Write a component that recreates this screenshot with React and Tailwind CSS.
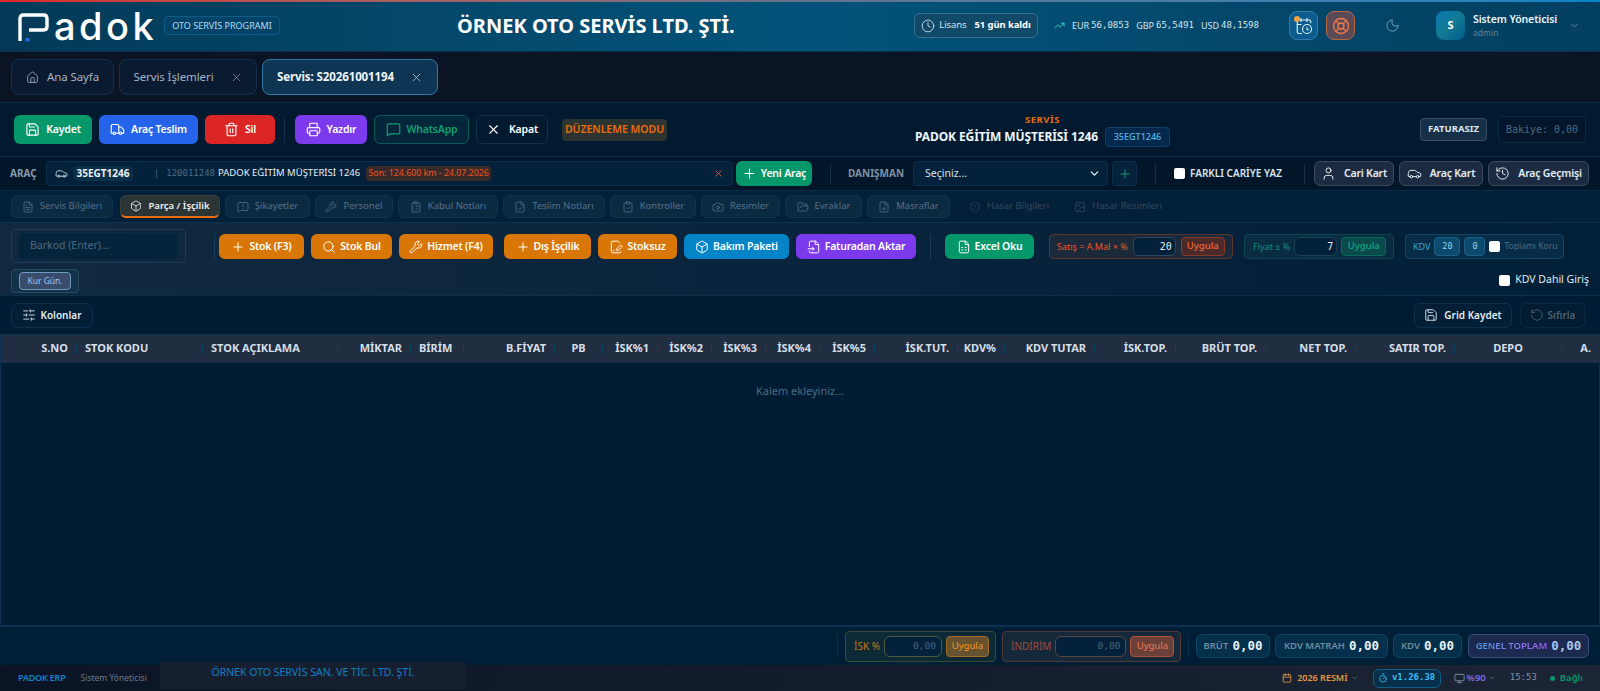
import React from "react";
import {
  Save, Truck, Trash2, Printer, MessageSquare, X, House, Clock, TrendingUp, CalendarClock, LifeBuoy, Moon,
  ChevronDown, Car, Plus, User, History, FileText, Box, MessageSquareWarning, Wrench, ClipboardList, FileCheck,
  ClipboardCheck, Camera, FolderOpen, FileDown, ShieldAlert, Image as ImageIcon, Search, FileSpreadsheet,
  FileInput, FilePenLine, SlidersHorizontal, RotateCcw, Monitor, Calendar, Timer,
} from "lucide-react";

const Tab = ({ className, children }) => (
  <div className={`h-9 flex items-center rounded-lg border text-[11.5px] tracking-[-0.1px] ${className}`}>{children}</div>
);

const ActionBtn = ({ icon: I, label, className, color = "text-white" }) => (
  <button className={`h-[29px] flex items-center justify-center gap-1.5 rounded-md text-[10.5px] font-semibold tracking-[-0.2px] ${color} ${className}`}>
    <I size={15} strokeWidth={1.8} />
    {label}
  </button>
);

const CardBtn = ({ icon: I, label, className }) => (
  <button className={`h-[25px] flex items-center justify-center gap-2 rounded-md border border-[#3a4a60] bg-[#1c2b42] text-[10.5px] font-semibold tracking-[-0.2px] text-[#e5edf5] ${className}`}>
    <I size={15} strokeWidth={1.6} />
    {label}
  </button>
);

const SubTab = ({ icon: I, label, className }) => (
  <div className={`h-[23px] flex items-center justify-center gap-1.5 rounded-md border border-[#0e3350] bg-[#0a2a42] text-[9.5px] text-[#57708a] ${className}`}>
    <I size={12} strokeWidth={1.6} />
    {label}
  </div>
);

const ToolBtn = ({ icon: I, label, className }) => (
  <button className={`h-[25px] flex items-center justify-center gap-1 rounded-md text-[10.5px] font-semibold tracking-[-0.2px] text-white ${className}`}>
    <I size={14} strokeWidth={1.7} />
    {label}
  </button>
);

const Sep = ({ className }) => <div className={`w-px shrink-0 ${className}`} />;

const cols = [
  ["S.NO", "r"], ["STOK KODU", "l"], ["STOK AÇIKLAMA", "l"], ["MİKTAR", "r"], ["BİRİM", "l"], ["B.FİYAT", "r"], ["PB", "c"],
  ["İSK%1", "r"], ["İSK%2", "r"], ["İSK%3", "r"], ["İSK%4", "r"], ["İSK%5", "r"], ["İSK.TUT.", "r"], ["KDV%", "r"],
  ["KDV TUTAR", "r"], ["İSK.TOP.", "r"], ["BRÜT TOP.", "r"], ["NET TOP.", "r"], ["SATIR TOP.", "r"], ["DEPO", "c"], ["A.", "e"],
];

const Total = ({ label, value, className }) => (
  <div className={`h-[24px] flex items-center justify-center gap-1 rounded-md border border-[#0e4465] bg-[#04304c] text-[9.5px] font-semibold text-[#6f8b9e] ${className}`}>
    {label}
    <span className="font-['DejaVu_Sans_Mono',monospace] text-[12.5px] font-bold text-[#e8f2f8]">{value}</span>
  </div>
);

export default function App() {
  return (
    <div className="h-screen w-full overflow-hidden flex flex-col bg-[#001c33] font-['Noto_Sans',sans-serif] text-white">
      {/* header */}
      <header className="h-[52px] shrink-0 relative flex items-center bg-gradient-to-r from-[#033a58] via-[#02537a] to-[#033f60] border-b border-[#0c2f4c]">
        <div className="absolute left-0 right-0 top-0 h-[2px] bg-gradient-to-r from-[#dc2626] via-[#64748b] to-[#0284c7]" />
        <div className="ml-[18px] w-[146px] flex items-center shrink-0">
          <svg width="31" height="29" viewBox="0 0 31 29" fill="none" className="mt-[3px]">
            <path d="M2 28V5.5Q2 2 5.5 2H25.5Q29 2 29 5.5V13.5Q29 17 25.5 17H11" stroke="#fff" strokeWidth="3.4" />
            <rect x="7.5" y="25" width="4" height="3.4" fill="#2563eb" />
          </svg>
          <span className="ml-[5px] font-['Inter',sans-serif] text-[38px] leading-none font-medium tracking-[3.5px] text-white">adok</span>
        </div>
        <div className="h-[19px] w-[116px] flex items-center justify-center rounded border border-[#0f5a86] bg-[#034368] text-[9px] text-[#b6dcf2]">OTO SERVİS PROGRAMI</div>
        <div className="ml-[177px] w-[276px] text-center text-[20px] font-bold whitespace-nowrap text-white">ÖRNEK OTO SERVİS LTD. ŞTİ.</div>
        <div className="ml-[181px] h-[25px] w-[124px] flex items-center justify-center gap-1 rounded-md border border-[#35708f] bg-[#114a69] text-[9.5px] tracking-[-0.1px] text-[#cfe3ee]">
          <Clock size={14} strokeWidth={1.5} />
          <span>Lisans</span>
          <span className="ml-1 font-bold text-white">51 gün kaldı</span>
        </div>
        <div className="ml-[16px] w-[220px] flex items-center gap-[7px] text-[9px] text-[#d3e4ee]">
          <TrendingUp size={11} className="text-[#2dd4bf]" />
          <span className="flex items-center gap-[2px]">EUR <span className="font-['DejaVu_Sans_Mono',monospace] text-[9px]">56,0853</span></span>
          <span className="flex items-center gap-[2px]">GBP <span className="font-['DejaVu_Sans_Mono',monospace] text-[9px]">65,5491</span></span>
          <span className="flex items-center gap-[2px]">USD <span className="font-['DejaVu_Sans_Mono',monospace] text-[9px]">48,1598</span></span>
        </div>
        <div className="ml-[15px] h-[29px] w-[29px] relative flex items-center justify-center rounded-lg border border-[#2b7fb0] bg-[#0c5d8e] text-[#dff1fb]">
          <CalendarClock size={18} strokeWidth={1.5} />
          <span className="absolute left-[4px] top-[4px] h-[6px] w-[6px] rounded-full bg-[#f0a13c]" />
        </div>
        <div className="ml-[8px] h-[29px] w-[29px] flex items-center justify-center rounded-lg border border-[#b9653f] bg-[#5b4a55] text-[#f47a4c]">
          <LifeBuoy size={18} strokeWidth={1.7} />
        </div>
        <Moon size={15} strokeWidth={1.5} className="ml-[30px] text-[#7ea3b9]" />
        <div className="ml-[36px] h-[29px] w-[29px] flex items-center justify-center rounded-lg bg-gradient-to-br from-[#0c79b8] via-[#127a90] to-[#035b90] text-[11px] font-bold">S</div>
        <div className="ml-[8px] w-[92px] flex flex-col">
          <span className="text-[10.5px] leading-[15px] font-semibold tracking-[-0.1px] text-[#eaf3f8] whitespace-nowrap">Sistem Yöneticisi</span>
          <span className="text-[8.5px] leading-[12px] text-[#5f8298]">admin</span>
        </div>
        <ChevronDown size={11} className="ml-[4px] text-[#6d90a6]" />
      </header>

      {/* open tabs */}
      <div className="h-[51px] shrink-0 flex items-center gap-[5px] pl-[11px] bg-[#0b1424] border-b border-[#12303f]">
        <Tab className="w-[103px] justify-center gap-2 border-[#12304f] bg-[#0a1a30] text-[#a5b4c4]">
          <House size={13} strokeWidth={1.5} />Ana Sayfa
        </Tab>
        <Tab className="w-[138px] justify-center gap-4 border-[#12304f] bg-[#0a1a30] text-[#a5b4c4]">
          Servis İşlemleri<X size={13} strokeWidth={1.5} className="text-[#7b8ea1]" />
        </Tab>
        <Tab className="w-[176px] justify-center gap-4 border-[#2f7ba8] bg-[#0e3553] font-bold text-[#f0f6fa]">
          Servis: S20261001194<X size={13} strokeWidth={1.5} className="text-[#b9c9d6]" />
        </Tab>
      </div>

      {/* action toolbar */}
      <div className="h-[54px] shrink-0 flex items-center pl-[14px] gap-[7px] bg-[#021a30] border-b border-[#0a2b45]">
        <ActionBtn icon={Save} label="Kaydet" className="w-[78px] bg-[#059669]" />
        <ActionBtn icon={Truck} label="Araç Teslim" className="w-[99px] bg-[#2563eb]" />
        <ActionBtn icon={Trash2} label="Sil" className="w-[70px] bg-[#dc2626]" />
        <Sep className="h-[24px] ml-[2px] mr-[1px] bg-[#12304a]" />
        <ActionBtn icon={Printer} label="Yazdır" className="w-[72px] ml-[2px] bg-[#7c3aed]" />
        <ActionBtn icon={MessageSquare} label="WhatsApp" color="text-[#0f9f75]" className="w-[95px] border border-[#0d5a55] bg-[#03263a]" />
        <ActionBtn icon={X} label="Kapat" className="w-[72px] border border-[#0f2f4a] bg-[#021a30] gap-2" />
        <div className="ml-[7px] h-[22px] w-[105px] flex items-center justify-center rounded bg-[#2b3430] text-[10.5px] font-semibold text-[#ea6c0c]">DÜZENLEME MODU</div>
        <div className="ml-[241px] w-[255px] flex flex-col items-center">
          <span className="text-[9.5px] leading-[14px] font-bold tracking-[0.5px] text-[#ea6c0c]">SERVİS</span>
          <div className="flex items-center gap-[7px] text-[12px] font-bold tracking-[-0.1px] text-[#f0f5f9] whitespace-nowrap">
            PADOK EĞİTİM MÜŞTERİSİ 1246
            <span className="h-[20px] w-[65px] flex items-center justify-center rounded border border-[#10406a] bg-[#04294d] text-[9px] font-medium tracking-normal text-[#56b7e6]">35EGT1246</span>
          </div>
        </div>
        <div className="ml-[243px] h-[23px] w-[67px] flex items-center justify-center rounded border border-[#3a4f63] bg-[#16304a] text-[9.5px] font-bold text-[#dbe6ee]">FATURASIZ</div>
        <div className="ml-[4px] h-[27px] w-[88px] flex items-center justify-center rounded border border-[#0b2b44] bg-[#04162a] font-['DejaVu_Sans_Mono',monospace] text-[10px] text-[#52697c]">Bakiye: 0,00</div>
      </div>

      {/* vehicle row */}
      <div className="h-[34px] shrink-0 flex items-center pl-[10px] bg-[#02162a] border-b border-[#0a2b45]">
        <span className="w-[36px] text-[10px] font-bold text-[#8a9cad]">ARAÇ</span>
        <div className="h-[25px] w-[687px] flex items-center rounded border border-[#0e2f4b] bg-[#03213a] pl-[8px] pr-[8px] text-[9.5px]">
          <Car size={13} strokeWidth={1.7} className="text-[#c8d6e0]" />
          <span className="ml-[5px] h-[15px] w-[60px] flex items-center justify-center rounded-sm bg-[#0a2f48] text-[10px] font-bold text-[#e8f0f5]">35EGT1246</span>
          <span className="ml-[21px] text-[#4f6c82]">|</span>
          <span className="ml-[7px] font-['DejaVu_Sans_Mono',monospace] text-[9px] text-[#4f6c82]">120011248</span>
          <span className="ml-[3px] text-[#e8f0f5] whitespace-nowrap">PADOK EĞİTİM MÜŞTERİSİ 1246</span>
          <span className="ml-[6px] h-[15px] w-[125px] flex items-center justify-center rounded-sm bg-[#3a2a2a] text-[8.8px] text-[#f0551e] whitespace-nowrap">Son: 124.600 km - 24.07.2026</span>
          <X size={11} className="ml-auto text-[#d9573a]" />
        </div>
        <ActionBtn icon={Plus} label="Yeni Araç" className="ml-[3px] !h-[25px] w-[76px] bg-[#059669] !gap-1" />
        <Sep className="ml-[18px] h-[20px] bg-[#12304a]" />
        <span className="ml-[17px] w-[65px] text-[10px] font-bold text-[#7f92a3]">DANIŞMAN</span>
        <div className="h-[25px] w-[195px] flex items-center justify-between rounded border border-[#0e2f4b] bg-[#03213a] pl-[11px] pr-[6px] text-[10.5px] text-[#d6e2ea]">
          Seçiniz...
          <ChevronDown size={13} strokeWidth={2.5} className="text-[#e5edf3]" />
        </div>
        <div className="ml-[4px] h-[25px] w-[25px] flex items-center justify-center rounded border border-[#0e2f4b] bg-[#04233a] text-[#10a97c]">
          <Plus size={14} strokeWidth={1.5} />
        </div>
        <Sep className="ml-[18px] h-[20px] bg-[#12304a]" />
        <span className="ml-[18px] h-[11px] w-[11px] rounded-[2px] bg-white" />
        <span className="ml-[5px] w-[100px] text-[10px] font-semibold text-[#dbe6ee] whitespace-nowrap">FARKLI CARİYE YAZ</span>
        <Sep className="ml-[14px] h-[20px] bg-[#12304a]" />
        <CardBtn icon={User} label="Cari Kart" className="ml-[9px] w-[80px]" />
        <CardBtn icon={Car} label="Araç Kart" className="ml-[5px] w-[84px]" />
        <CardBtn icon={History} label="Araç Geçmişi" className="ml-[5px] w-[101px]" />
      </div>

      {/* sub tabs */}
      <div className="h-[32px] shrink-0 flex items-center pl-[11px] gap-[5px] bg-[#03203a] border-b border-[#0b3252]">
        <SubTab icon={FileText} label="Servis Bilgileri" className="w-[102px]" />
        <div className="h-[23px] w-[100px] ml-[2px] flex items-center justify-center gap-1.5 rounded-md border border-[#3a4240] border-b-2 border-b-[#ea6c0c] bg-[#2c3536] text-[9.5px] font-semibold text-[#f0f4f6]">
          <Box size={12} strokeWidth={1.6} />Parça / İşçilik
        </div>
        <SubTab icon={MessageSquareWarning} label="Şikayetler" className="w-[85px]" />
        <SubTab icon={Wrench} label="Personel" className="w-[78px]" />
        <SubTab icon={ClipboardList} label="Kabul Notları" className="w-[100px]" />
        <SubTab icon={FileCheck} label="Teslim Notları" className="w-[102px]" />
        <SubTab icon={ClipboardCheck} label="Kontroller" className="w-[86px]" />
        <SubTab icon={Camera} label="Resimler" className="w-[79px]" />
        <SubTab icon={FolderOpen} label="Evraklar" className="w-[77px]" />
        <SubTab icon={FileDown} label="Masraflar" className="w-[83px]" />
        <div className="ml-[5px] w-[98px] flex items-center justify-center gap-1.5 text-[9.5px] text-[#34495c]"><ShieldAlert size={12} strokeWidth={1.5} />Hasar Bilgileri</div>
        <div className="ml-[2px] w-[106px] flex items-center justify-center gap-1.5 text-[9.5px] text-[#34495c]"><ImageIcon size={12} strokeWidth={1.5} />Hasar Resimleri</div>
      </div>

      {/* stock toolbar */}
      <div className="h-[72px] shrink-0 flex flex-col pt-[6px] pl-[11px] bg-gradient-to-r from-[#11293f] via-[#09243c] to-[#021f38]">
        <div className="flex items-start">
          <div className="h-[34px] w-[175px] flex items-center rounded border border-[#1e3c57] px-[7px]">
            <div className="h-[26px] w-full flex items-center rounded bg-[#04243c] pl-[11px] text-[10.5px] text-[#4f6a80]">Barkod (Enter)...</div>
          </div>
          <Sep className="ml-[28px] mt-[5px] h-[25px] bg-[#1b3a55]" />
          <div className="ml-[4px] mt-[5px] flex items-center gap-[7px]">
            <ToolBtn icon={Plus} label="Stok (F3)" className="w-[85px] bg-[#d97706]" />
            <ToolBtn icon={Search} label="Stok Bul" className="w-[81px] bg-[#d97706]" />
            <ToolBtn icon={Wrench} label="Hizmet (F4)" className="w-[94px] bg-[#d97706]" />
            <ToolBtn icon={Plus} label="Dış İşçilik" className="w-[87px] ml-[4px] bg-[#d97706]" />
            <ToolBtn icon={FilePenLine} label="Stoksuz" className="w-[79px] bg-[#d97706]" />
            <ToolBtn icon={Box} label="Bakım Paketi" className="w-[105px] bg-[#0284c7]" />
            <ToolBtn icon={FileInput} label="Faturadan Aktar" className="w-[120px] bg-[#7c3aed]" />
            <Sep className="ml-[7px] h-[25px] bg-[#1b3a55]" />
            <ToolBtn icon={FileSpreadsheet} label="Excel Oku" className="w-[89px] ml-[7px] bg-[#059669]" />
            <div className="ml-[8px] h-[25px] w-[184px] flex items-center rounded border border-[#5b3630] bg-[#1a2a3b] pl-[7px] text-[9px] text-[#f0551e] whitespace-nowrap">
              Satış = A.Mal × %
              <span className="ml-[5px] h-[19px] w-[43px] flex items-center justify-end rounded-md border border-[#30475c] bg-[#03213a] pr-[3px] font-['DejaVu_Sans_Mono',monospace] text-[10px] text-[#e6eef3]">20</span>
              <span className="ml-[5px] h-[19px] w-[44px] flex items-center justify-center rounded border border-[#8a3a26] bg-[#4a2a2a] text-[9.5px] font-medium text-[#f26a35]">Uygula</span>
            </div>
            <div className="ml-[4px] h-[25px] w-[150px] flex items-center rounded border border-[#0c4552] bg-[#0a2c40] pl-[8px] text-[9px] text-[#0d8f7c] whitespace-nowrap">
              Fiyat ± %
              <span className="ml-[4px] h-[19px] w-[43px] flex items-center justify-end rounded-md border border-[#1e4056] bg-[#03213a] pr-[3px] font-['DejaVu_Sans_Mono',monospace] text-[10px] text-[#e6eef3]">7</span>
              <span className="ml-[4px] h-[19px] w-[45px] flex items-center justify-center rounded border border-[#0b6a60] bg-[#0a4a4a] text-[9.5px] font-medium text-[#0fa586]">Uygula</span>
            </div>
            <div className="ml-[4px] h-[25px] w-[159px] flex items-center rounded border border-[#124565] bg-[#072c48] pl-[7px] text-[9px] text-[#38a6dc] whitespace-nowrap">
              KDV
              <span className="ml-[4px] h-[19px] w-[26px] flex items-center justify-center rounded border border-[#1d5f86] bg-[#0c4a6e] font-['DejaVu_Sans_Mono',monospace] text-[8.5px] text-[#8ed3f2]">20</span>
              <span className="ml-[4px] h-[19px] w-[21px] flex items-center justify-center rounded border border-[#1d5f86] bg-[#0c4a6e] font-['DejaVu_Sans_Mono',monospace] text-[8.5px] text-[#8ed3f2]">0</span>
              <span className="ml-[4px] h-[11px] w-[11px] rounded-[2px] bg-white" />
              <span className="ml-[4px] text-[8.5px] text-[#4f6a80]">Toplamı Koru</span>
            </div>
          </div>
        </div>
        <div className="mt-[6px] flex items-center justify-between pr-[11px]">
          <div className="h-[24px] w-[68px] flex items-center justify-center rounded-sm border border-[#2b4a62] bg-[#12324b]">
            <span className="h-[18px] w-[52px] flex items-center justify-center rounded border border-[#6f9ac0] bg-[#3a4c6b] text-[8.5px] text-[#9fc4f5]">Kur Gün.</span>
          </div>
          <div className="flex items-center gap-[5px] -mt-[2px] text-[10.5px] text-[#e2ebf1]">
            <span className="h-[11px] w-[11px] rounded-[2px] bg-white" />KDV Dahil Giriş
          </div>
        </div>
      </div>

      {/* grid toolbar */}
      <div className="h-[39px] shrink-0 flex items-center justify-between pl-[11px] pr-[15px] bg-[#001c33] border-t border-[#0a2e4b]">
        <button className="h-[25px] w-[82px] flex items-center justify-center gap-1 rounded-md border border-[#0b3150] bg-[#031f36] text-[10px] font-semibold text-[#e4edf3]">
          <SlidersHorizontal size={14} strokeWidth={1.5} />Kolonlar
        </button>
        <div className="flex items-center gap-[8px]">
          <button className="h-[25px] w-[98px] flex items-center justify-center gap-1.5 rounded-md border border-[#0b3150] bg-[#031f36] text-[10px] font-semibold text-[#e4edf3]">
            <Save size={14} strokeWidth={1.5} />Grid Kaydet
          </button>
          <button className="h-[25px] w-[65px] flex items-center justify-center gap-1 rounded-md border border-[#0a2a44] bg-[#021c32] text-[10px] font-semibold text-[#4b6273]">
            <RotateCcw size={14} strokeWidth={1.5} />Sıfırla
          </button>
        </div>
      </div>

      {/* table */}
      <div className="flex-1 min-h-0 flex flex-col border-b-2 border-x border-[#0a3152] bg-[#001c33]">
        <div className="h-[29px] shrink-0 grid grid-cols-[76px_126px_135px_73px_53px_91px_48px_55px_54px_54px_54px_55px_83px_47px_90px_81px_90px_90px_99px_107px_1fr] bg-[#212d40] border-b border-t border-[#0a3152] text-[11px] font-bold text-[#d3dfe8]">
          {cols.map(([t, a]) => (
            <div key={t} className="flex items-center justify-between">
              {a === "l" && <span className="pl-[8px] whitespace-nowrap">{t}</span>}
              {a === "r" && <span className="ml-auto pr-[8px] whitespace-nowrap">{t}</span>}
              {a === "c" && <span className="flex-1 text-center whitespace-nowrap">{t}</span>}
              {a === "e" && <span className="ml-auto pr-[8px] whitespace-nowrap">{t}</span>}
              {a !== "e" && <span className="h-[11px] w-px shrink-0 bg-[#0c4260]" />}
            </div>
          ))}
        </div>
        <div className="pt-[20px] text-center text-[11px] text-[#4d6a80]">Kalem ekleyiniz...</div>
      </div>

      {/* totals */}
      <div className="h-[38px] shrink-0 flex items-center justify-end pr-[11px] gap-[5px] bg-[#001e35]">
        <Sep className="h-[24px] mr-[2px] bg-[#0c2f49]" />
        <div className="h-[31px] w-[151px] flex items-center rounded border border-[#3a4a35] bg-[#0c2a36] pl-[8px] text-[10px] text-[#c8761a]">
          İSK %
          <span className="ml-[4px] h-[21px] w-[58px] flex items-center justify-end rounded-md border border-[#4d5a3e] bg-[#03213a] pr-[5px] font-['DejaVu_Sans_Mono',monospace] text-[9.5px] text-[#46657c]">0,00</span>
          <span className="ml-[4px] h-[21px] w-[43px] flex items-center justify-center rounded border border-[#a66a22] bg-[#665230] text-[9.5px] text-[#f59a1e]">Uygula</span>
        </div>
        <div className="h-[31px] w-[179px] ml-[1px] flex items-center rounded border border-[#523a38] bg-[#15293a] pl-[8px] text-[10px] text-[#a34c3c]">
          İNDİRİM
          <span className="ml-[4px] h-[21px] w-[71px] flex items-center justify-end rounded-md border border-[#5a4540] bg-[#03213a] pr-[5px] font-['DejaVu_Sans_Mono',monospace] text-[9.5px] text-[#46657c]">0,00</span>
          <span className="ml-[4px] h-[21px] w-[44px] flex items-center justify-center rounded border border-[#b0523c] bg-[#6a4038] text-[9.5px] text-[#f07a5a]">Uygula</span>
        </div>
        <Sep className="h-[24px] mx-[2px] bg-[#0c2f49]" />
        <Total label="BRÜT" value="0,00" className="w-[74px]" />
        <Total label="KDV MATRAH" value="0,00" className="w-[113px]" />
        <Total label="KDV" value="0,00" className="w-[69px]" />
        <div className="h-[24px] w-[121px] ml-[1px] flex items-center justify-center gap-1 rounded-md border border-[#3a4f80] bg-[#1c2a50] text-[9.5px] font-semibold">
          <span className="bg-gradient-to-r from-[#3b9fe8] to-[#a855f7] bg-clip-text text-transparent">GENEL TOPLAM</span>
          <span className="font-['DejaVu_Sans_Mono',monospace] text-[12.5px] font-bold text-[#a9c6f0]">0,00</span>
        </div>
      </div>

      {/* status bar */}
      <footer className="relative h-[26px] shrink-0 flex items-center pl-[18px] pr-[17px] bg-gradient-to-r from-[#0b1424] to-[#1c2536] text-[9px]">
        <span className="font-semibold tracking-[-0.2px] text-[#0e87d1]">PADOK ERP</span>
        <span className="ml-[15px] text-[8.5px] text-[#6b7a8a]">Sistem Yöneticisi</span>
        <div className="absolute left-[160px] top-[-3px] h-[27px] w-[306px] flex items-start justify-center pt-[3px] bg-[#161f30] text-[10.5px] text-[#0e7fc4]">ÖRNEK OTO SERVİS SAN. VE TİC. LTD. ŞTİ.</div>
        <div className="ml-auto flex items-center text-[9.5px]">
          <span className="flex items-center gap-[5px] text-[9px] font-semibold text-[#e59a3c]"><Calendar size={10} />2026 RESMİ</span>
          <ChevronDown size={8} className="ml-[3px] text-[#6b7a8a]" />
          <span className="ml-[14px] h-[19px] w-[68px] flex items-center justify-center gap-1 rounded-md border border-[#0d5f85] bg-[#082f49] font-['DejaVu_Sans_Mono',monospace] text-[9px] font-bold text-[#38bdf8]"><Timer size={10} />v1.26.38</span>
          <Monitor size={11} className="ml-[13px] text-[#7f93a6]" />
          <span className="ml-[2px] font-semibold text-[#7c6cf0]">%90</span>
          <ChevronDown size={8} className="ml-[2px] text-[#6b7a8a]" />
          <span className="ml-[14px] font-['DejaVu_Sans_Mono',monospace] text-[9px] text-[#7f93a6]">15:53</span>
          <span className="ml-[13px] h-[5px] w-[5px] rounded-full bg-[#059669]" />
          <span className="ml-[5px] font-semibold text-[#059669]">Bağlı</span>
        </div>
      </footer>
    </div>
  );
}
